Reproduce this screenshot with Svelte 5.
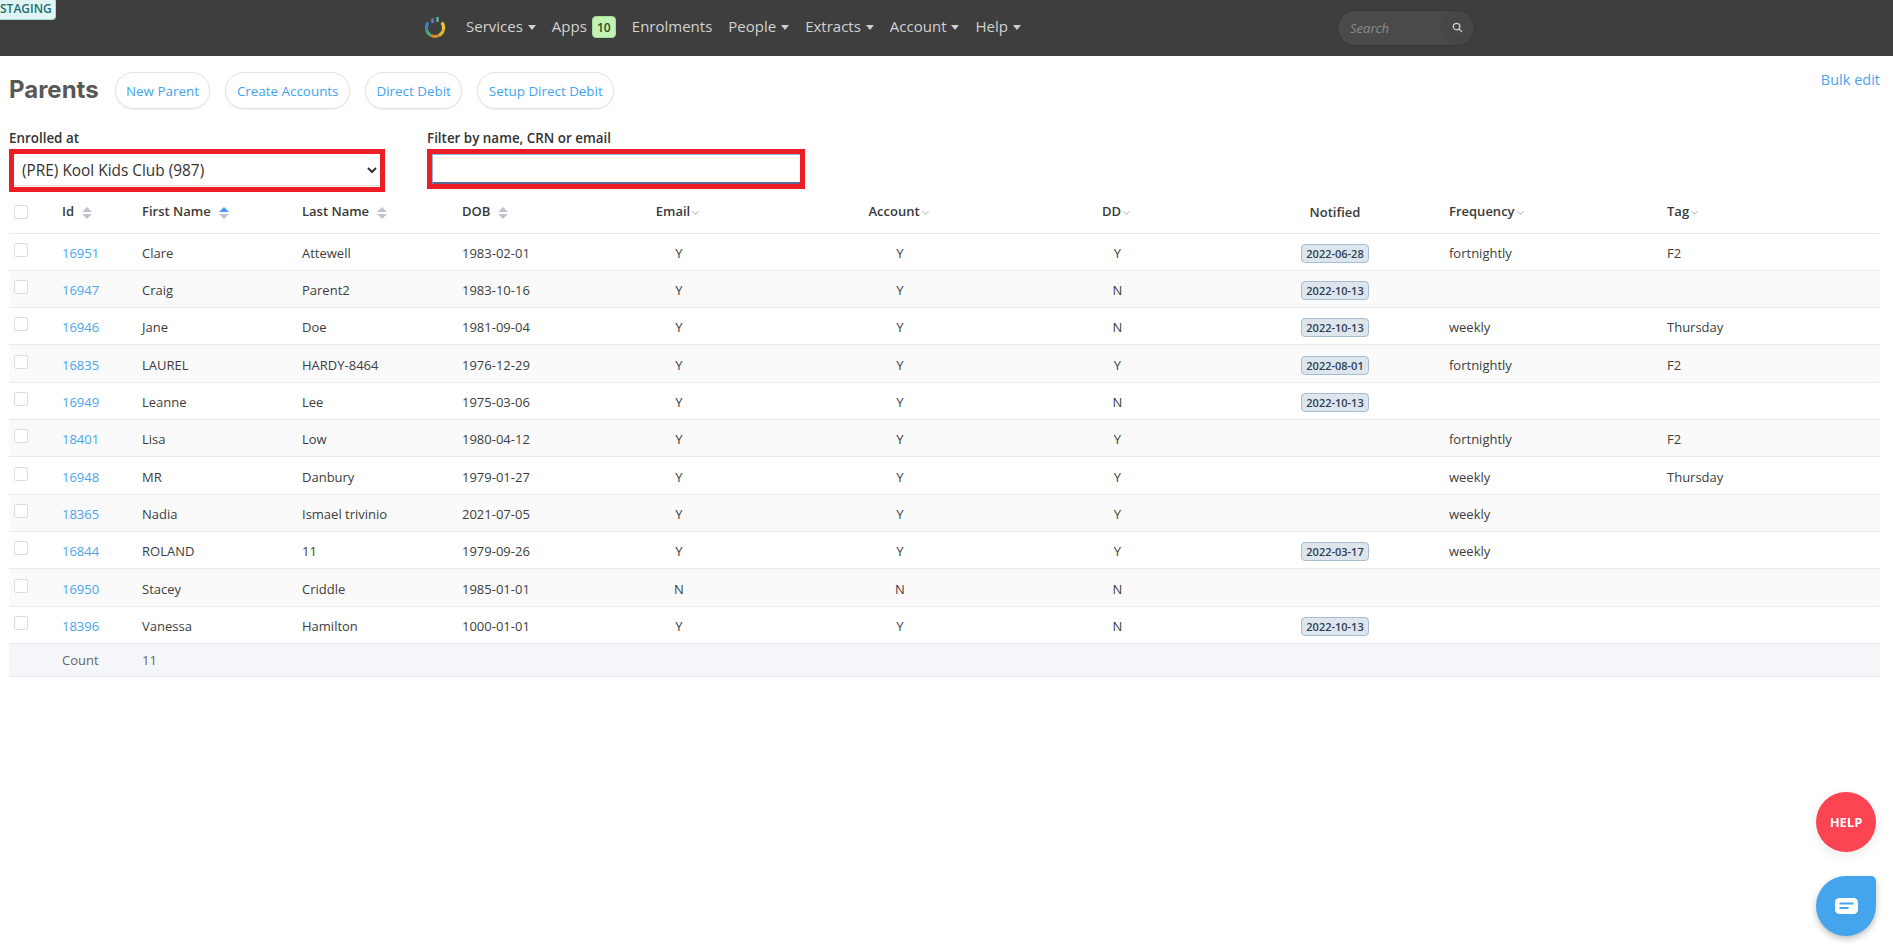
<script>
  const nav = [
    { t: 'Services', c: true },
    { t: 'Apps', badge: '10' },
    { t: 'Enrolments' },
    { t: 'People', c: true },
    { t: 'Extracts', c: true },
    { t: 'Account', c: true },
    { t: 'Help', c: true }
  ];
  const actions = ['New Parent', 'Create Accounts', 'Direct Debit', 'Setup Direct Debit'];
  const rows = [
    ['16951','Clare','Attewell','1983-02-01','Y','Y','Y','2022-06-28','fortnightly','F2'],
    ['16947','Craig','Parent2','1983-10-16','Y','Y','N','2022-10-13','',''],
    ['16946','Jane','Doe','1981-09-04','Y','Y','N','2022-10-13','weekly','Thursday'],
    ['16835','LAUREL','HARDY-8464','1976-12-29','Y','Y','Y','2022-08-01','fortnightly','F2'],
    ['16949','Leanne','Lee','1975-03-06','Y','Y','N','2022-10-13','',''],
    ['18401','Lisa','Low','1980-04-12','Y','Y','Y','','fortnightly','F2'],
    ['16948','MR','Danbury','1979-01-27','Y','Y','Y','','weekly','Thursday'],
    ['18365','Nadia','Ismael trivinio','2021-07-05','Y','Y','Y','','weekly',''],
    ['16844','ROLAND','11','1979-09-26','Y','Y','Y','2022-03-17','weekly',''],
    ['16950','Stacey','Criddle','1985-01-01','N','N','N','','',''],
    ['18396','Vanessa','Hamilton','1000-01-01','Y','Y','N','2022-10-13','','']
  ];
</script>

<div class="page">
  <header class="topbar">
    <span class="staging">STAGING</span>
    <svg class="logo" viewBox="0 0 22 22" width="22" height="22" fill="none" stroke-width="3">
      <path d="M4.2 6.5 A9 9 0 0 0 2.6 14" stroke="#3f7fc4" />
      <path d="M2.6 14 A9 9 0 0 0 7 19.5" stroke="#4aa37a" />
      <path d="M7 19.5 A9 9 0 0 0 15 19.5" stroke="#d98a2b" />
      <path d="M15 19.5 A9 9 0 0 0 19.4 14" stroke="#e3b52f" />
      <path d="M19.4 14 A9 9 0 0 0 17.8 6.5" stroke="#e9c23c" />
      <path d="M8.5 2.5 V7" stroke="#6d7fc0" stroke-width="2.4" />
      <path d="M13.5 1 V6" stroke="#55b6a6" stroke-width="2.4" />
    </svg>
    <nav class="menu">
      {#each nav as item}
        <span class="menu-item">
          {item.t}
          {#if item.c}<i class="tri"></i>{/if}
          {#if item.badge}<b class="nav-badge">{item.badge}</b>{/if}
        </span>
      {/each}
    </nav>
    <div class="search">
      <span class="search-text">Search</span>
      <span class="search-btn">
        <svg viewBox="0 0 12 12" width="11" height="11" fill="none" stroke="#d0d0d0" stroke-width="1.4">
          <circle cx="5" cy="5" r="3.6" /><path d="M7.8 7.8 L11 11" />
        </svg>
      </span>
    </div>
  </header>

  <main class="content">
    <div class="title-row">
      <h1>Parents</h1>
      <div class="actions">
        {#each actions as a}<button class="pill">{a}</button>{/each}
      </div>
      <a class="bulk" href="#bulk">Bulk edit</a>
    </div>

    <div class="filters">
      <div class="f-one">
        <div class="f-label">Enrolled at</div>
        <div class="red">
          <select class="sel">
            <option>(PRE) Kool Kids Club (987)</option>
          </select>
        </div>
      </div>
      <div class="f-two">
        <div class="f-label">Filter by name, CRN or email</div>
        <div class="red red-two"><input class="txt" /></div>
      </div>
    </div>

    <table>
      <colgroup>
        <col class="c0" /><col class="c1" /><col class="c2" /><col class="c2" /><col class="c3" />
        <col class="c4" /><col class="c5" /><col class="c6" /><col class="c7" /><col class="c8" /><col class="c9" />
      </colgroup>
      <thead>
        <tr>
          <th class="chk"><span class="box head-box"></span></th>
          {#each ['Id','First Name','Last Name','DOB'] as h}
            <th>{h}<span class="sort"><i class="up" class:on={h === 'First Name'}></i><i class="down"></i></span></th>
          {/each}
          {#each ['Email','Account','DD'] as h}
            <th class="mid shift">{h}<span class="chev"></span></th>
          {/each}
          <th class="mid notified">Notified</th>
          {#each ['Frequency','Tag'] as h}
            <th>{h}<span class="chev"></span></th>
          {/each}
        </tr>
      </thead>
      <tbody>
        {#each rows as r}
          <tr>
            <td class="chk"><span class="box"></span></td>
            <td><a href="#p">{r[0]}</a></td>
            <td>{r[1]}</td>
            <td>{r[2]}</td>
            <td>{r[3]}</td>
            <td class="mid">{r[4]}</td>
            <td class="mid">{r[5]}</td>
            <td class="mid">{r[6]}</td>
            <td class="mid">{#if r[7]}<span class="date">{r[7]}</span>{/if}</td>
            <td>{r[8]}</td>
            <td>{r[9]}</td>
          </tr>
        {/each}
      </tbody>
      <tfoot>
        <tr>
          <td></td><td>Count</td><td>11</td>
          <td colspan="8"></td>
        </tr>
      </tfoot>
    </table>
  </main>

  <button class="fab help">HELP</button>
  <button class="fab chat" aria-label="Chat">
    <svg viewBox="0 0 23 16" width="23" height="16">
      <rect width="23" height="16" rx="4.5" fill="#fff" />
      <rect x="4.5" y="4.5" width="14" height="2" fill="#45a5ec" />
      <rect x="4.5" y="9" width="9" height="2" fill="#45a5ec" />
    </svg>
  </button>
</div>

<style>
  :global(body) {
    margin: 0;
    background: #fff;
    font-family: "Open Sans", "Noto Sans", sans-serif;
    color: #333;
  }
  .page { min-height: 951px; }

  .topbar {
    position: relative;
    height: 56px;
    background: #3e3e3e;
    display: flex;
    align-items: center;
    padding-left: 424px;
    box-sizing: border-box;
  }
  .staging {
    position: absolute;
    left: 0;
    top: 0;
    width: 56px;
    height: 20px;
    box-sizing: border-box;
    background: #e1f6f4;
    border: 1px solid #9fd8d4;
    border-top: 0;
    border-left: 0;
    border-radius: 0 0 4px 0;
    color: #1d6f70;
    font-size: 12px;
    font-weight: 600;
    line-height: 18px;
    white-space: nowrap;
  }
  .logo { flex: none; margin-top: -3px; }
  .menu {
    display: flex;
    align-items: center;
    margin-left: 20px;
    gap: 16px;
    margin-top: -4px;
  }
  .menu-item {
    display: inline-flex;
    align-items: center;
    color: #d2d2d2;
    font-size: 15px;
    white-space: nowrap;
  }
  .tri {
    display: inline-block;
    width: 0;
    height: 0;
    margin-left: 5px;
    margin-top: 2px;
    border: 4px solid transparent;
    border-top: 5px solid #cfcfcf;
    border-bottom: 0;
  }
  .nav-badge {
    display: inline-block;
    box-sizing: border-box;
    width: 24px;
    height: 22px;
    margin-left: 5px;
    margin-top: 1px;
    text-align: center;
    line-height: 21px;
    background: #c3f1b6;
    border: 1px solid #a3de94;
    border-radius: 4px;
    color: #24511c;
    font-size: 12px;
    font-weight: 600;
  }
  .search {
    position: absolute;
    left: 1337px;
    top: 10px;
    width: 138px;
    height: 36px;
    box-sizing: border-box;
    background: #4a4a4a;
    border: 1px solid #343434;
    border-radius: 18px;
    display: flex;
    align-items: center;
    justify-content: space-between;
    padding-left: 12px;
    overflow: hidden;
  }
  .search-text {
    color: #8a8a8a;
    font-style: italic;
    font-size: 13px;
  }
  .search-btn {
    width: 33px;
    height: 34px;
    border-radius: 17px;
    background: #464646;
    display: flex;
    align-items: center;
    justify-content: center;
    margin-top: -2px;
  }

  .content { padding: 16px 13px 0 9px; }
  .title-row {
    display: flex;
    align-items: flex-start;
    height: 37px;
  }
  h1 {
    margin: 0;
    width: 105.5px;
    font-family: "Inter", "Open Sans", sans-serif;
    font-size: 24px;
    font-weight: 700;
    line-height: 36px;
    color: #585858;
    letter-spacing: 0;
  }
  .actions { display: flex; gap: 15px; }
  .pill {
    height: 37px;
    box-sizing: border-box;
    padding: 0 10.5px;
    background: #fff;
    border: 1px solid #e3e3e3;
    border-radius: 19px;
    box-shadow: 0 1px 2px rgba(0,0,0,.07);
    color: #3fa4f0;
    font-family: inherit;
    font-size: 13.4px;
    white-space: nowrap;
  }
  .bulk {
    margin-left: auto;
    margin-top: -1px;
    color: #4aa5ee;
    font-size: 14.5px;
    line-height: 18px;
    text-decoration: none;
  }

  .filters {
    display: flex;
    align-items: flex-start;
    margin-top: 20px;
    height: 63px;
  }
  .f-one { width: 418px; }
  .f-two { width: 378px; }
  .f-label {
    height: 20px;
    font-size: 13.4px;
    font-weight: 600;
    line-height: 18px;
    color: #333;
  }
  .red {
    width: 376px;
    height: 43px;
    box-sizing: border-box;
    border: 5px solid #ee1c25;
    background: #fff;
  }
  .red-two { width: 378px; height: 40px; }
  .sel {
    display: block;
    width: 100%;
    height: 32px;
    box-sizing: border-box;
    padding: 1px 4px 0 4px;
    border: 0;
    border-bottom: 1px solid #ddd;
    background: #fff;
    color: #333;
    font-family: inherit;
    font-size: 15.4px;
    outline: none;
  }
  .txt {
    display: block;
    width: 100%;
    height: 30px;
    box-sizing: border-box;
    border: 0;
    border-top: 1px solid #8ab8e6;
    border-left: 1px solid #8ab8e6;
    border-bottom: 2px solid #5b6b96;
    outline: none;
    background: #fff;
  }

  table {
    width: 1871px;
    table-layout: fixed;
    border-collapse: collapse;
    font-size: 13px;
  }
  .c0 { width: 43px; }
  .c1 { width: 80px; }
  .c2 { width: 160px; }
  .c3 { width: 110px; }
  .c4 { width: 234px; }
  .c5 { width: 208px; }
  .c6 { width: 227px; }
  .c7 { width: 208px; }
  .c8 { width: 218px; }
  .c9 { width: 223px; }

  th {
    height: 41px;
    box-sizing: border-box;
    padding: 0 10px 2px;
    text-align: left;
    font-weight: 600;
    color: #3a3a3a;
    border-bottom: 1px solid #e9e9f0;
    white-space: nowrap;
  }
  td {
    height: 37.33px;
    box-sizing: border-box;
    padding: 2px 10px 0;
    border-bottom: 1px solid #e9e9f0;
    color: #3d3d3d;
    white-space: nowrap;
  }
  tbody tr:nth-child(even) td { background: #fafafb; }
  tfoot td {
    height: 32.4px;
    padding: 0 10px;
    background: #f5f6fa;
    color: #666;
  }
  .mid { text-align: center; }
  th.notified { padding-bottom: 1px; }
  td.chk, th.chk { padding: 0 0 0 5px; }
  .box {
    display: block;
    width: 14px;
    height: 14px;
    box-sizing: border-box;
    background: #fff;
    border: 1px solid #dcdce4;
    border-radius: 2px;
    margin-top: -4px;
  }
  .head-box { margin-top: 0; }
  a { color: #4aa5ee; text-decoration: none; }

  .sort {
    display: inline-flex;
    flex-direction: column;
    gap: 1.5px;
    margin-left: 8px;
    vertical-align: middle;
  }
  .sort i {
    display: block;
    width: 0;
    height: 0;
    border-left: 5px solid transparent;
    border-right: 5px solid transparent;
  }
  .up { border-bottom: 5px solid #bfc3cc; }
  .up.on { border-bottom-color: #4a9cf0; }
  .down { border-top: 5px solid #bfc3cc; }
  .chev {
    display: inline-block;
    width: 4px;
    height: 4px;
    margin-left: 3px;
    border-right: 1px solid #c4c4c4;
    border-bottom: 1px solid #c4c4c4;
    transform: rotate(45deg);
    vertical-align: 2px;
  }
  .shift .chev { margin-right: 4px; }
  .date {
    display: inline-block;
    box-sizing: border-box;
    width: 68px;
    height: 19px;
    background: #dde5ed;
    border: 1px solid #a9bdd1;
    border-radius: 4px;
    color: #2e3f52;
    font-size: 11px;
    font-weight: 600;
    line-height: 17px;
    text-align: center;
    vertical-align: middle;
  }

  .fab {
    position: fixed;
    right: 17px;
    width: 60px;
    height: 60px;
    padding: 0;
    border: 0;
    color: #fff;
    display: flex;
    align-items: center;
    justify-content: center;
    font-family: inherit;
  }
  .help {
    top: 792px;
    border-radius: 50%;
    background: #fc4553;
    font-size: 13px;
    font-weight: 700;
    box-shadow: 0 4px 14px rgba(0,0,0,.08);
  }
  .chat {
    top: 876px;
    border-radius: 30px 5px 30px 30px;
    background: #45a5ec;
    box-shadow: 0 3px 6px rgba(0,0,0,.25);
  }
</style>
